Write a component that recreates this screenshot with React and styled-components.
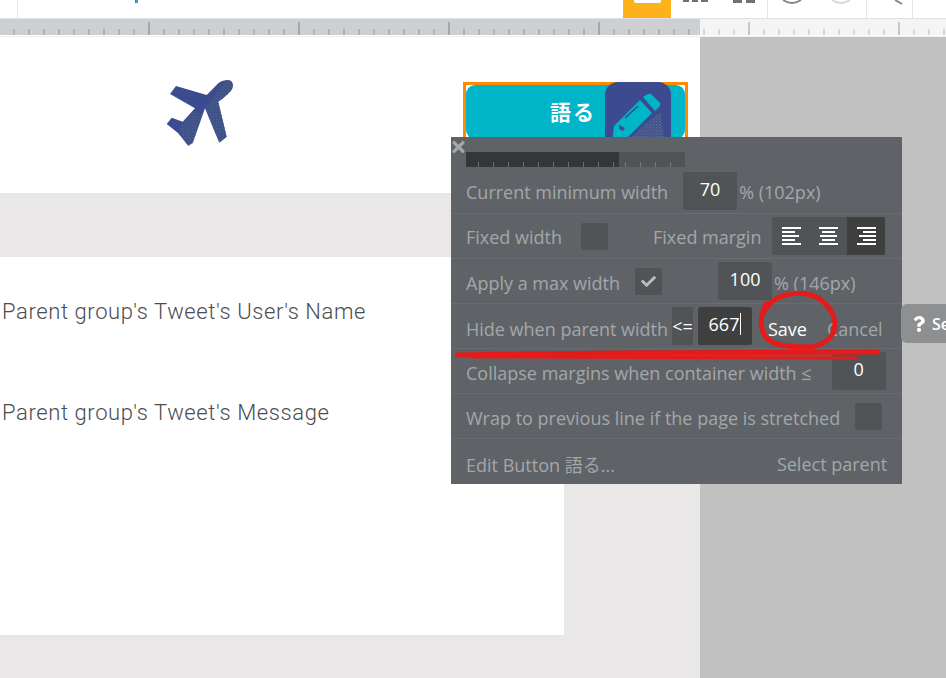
import styled, { createGlobalStyle } from 'styled-components';
import { FaCheck, FaTimes, FaQuestion } from 'react-icons/fa';

const GlobalStyle = createGlobalStyle`
  html, body {
    margin: 0;
    padding: 0;
    background: #fff;
  }
  #root {
    width: 946px;
    height: 678px;
  }
`;

const Page = styled.div`
  position: relative;
  display: flex;
  flex-direction: column;
  width: 946px;
  height: 678px;
  overflow: hidden;
  font-family: 'Open Sans', 'Noto Sans CJK JP', sans-serif;
`;

const TopBar = styled.div`
  display: flex;
  align-items: flex-end;
  height: 18px;
  flex: none;
  overflow: hidden;
  background: #fff;
`;

const TopDivider = styled.div`
  width: 1px;
  height: 18px;
  flex: none;
  margin-left: ${(p) => p.$left}px;
  background: #e6e6e6;
`;

const RedMark = styled.div`
  width: 3px;
  height: 3px;
  flex: none;
  align-self: flex-start;
  margin-left: ${(p) => p.$left}px;
  background: linear-gradient(90deg, #d8453f 50%, #3aa6c0 50%);
`;

const YellowTab = styled.div`
  display: flex;
  justify-content: center;
  width: 48px;
  height: 18px;
  flex: none;
  margin-left: 485px;
  background: #fdb11a;
`;

const TabGlyph = styled.div`
  width: 27px;
  height: 3px;
  background: #fff;
  border-radius: 0 0 2px 2px;
`;

const TopIcon = styled.svg`
  flex: none;
  align-self: flex-start;
  margin-left: ${(p) => p.$left}px;
`;

const Ruler = styled.div`
  display: flex;
  height: 19px;
  flex: none;
  box-sizing: border-box;
  border-top: 1px solid #e2e2e2;
  border-bottom: 1px solid #f0f0f0;
`;

const RulerTrack = styled.div`
  height: 16px;
  width: ${(p) => p.$width}px;
  flex: none;
  background: ${(p) => (p.$light ? '#f4f4f4' : '#cdd0d2')};
`;

const MinorTicks = styled.div`
  height: 16px;
  width: 100%;
  background-image: repeating-linear-gradient(90deg, transparent 0 ${(p) => p.$minor}px, ${(p) => p.$color} ${(p) => p.$minor}px ${(p) => p.$minor + 2}px, transparent ${(p) => p.$minor + 2}px 15px);
  background-size: 100% 6px;
  background-repeat: no-repeat;
  background-position: bottom;
`;

const MajorTicks = styled.div`
  height: 16px;
  width: 100%;
  background-image: repeating-linear-gradient(90deg, transparent 0 ${(p) => p.$major}px, ${(p) => p.$color} ${(p) => p.$major}px ${(p) => p.$major + 2}px, transparent ${(p) => p.$major + 2}px 150px);
  background-size: 100% 13px;
  background-repeat: no-repeat;
  background-position: bottom;
`;

const Workspace = styled.div`
  display: flex;
  flex: 1;
  min-height: 0;
`;

const Canvas = styled.div`
  display: flex;
  flex-direction: column;
  width: 700px;
  flex: none;
  background: #e9e7e8;
`;

const SideArea = styled.div`
  flex: 1;
  background: #c1c1c1;
`;

const HeaderCard = styled.div`
  display: flex;
  align-items: flex-start;
  height: 156px;
  flex: none;
  padding: 43px 0 0 166px;
  box-sizing: border-box;
  background: #fff;
`;

const SelectedButton = styled.div`
  display: flex;
  width: 225px;
  height: 64px;
  flex: none;
  margin: 2px 0 0 213px;
  border: 3px solid #ff8a00;
  box-sizing: border-box;
`;

const ButtonFace = styled.div`
  display: flex;
  justify-content: flex-end;
  width: 100%;
  height: 54px;
  padding-right: 14px;
  border-radius: 9px;
  box-sizing: border-box;
  background: #00b5c8;
`;

const ButtonLabel = styled.span`
  margin: 14px 9px 0 0;
  color: #fff;
  font-size: 21px;
  line-height: 26px;
  font-weight: 700;
  letter-spacing: 2px;
`;

const PencilTile = styled.svg`
  flex: none;
  margin-top: -3px;
`;

const BodyCard = styled.div`
  display: flex;
  flex-direction: column;
  width: 564px;
  height: 378px;
  flex: none;
  margin-top: 64px;
  padding: 40px 0 0 2px;
  box-sizing: border-box;
  background: #fff;
`;

const BodyLine = styled.div`
  height: ${(p) => p.$height}px;
  color: #4a4d50;
  font-family: Roboto, sans-serif;
  font-size: 22px;
  font-weight: 300;
  line-height: 30px;
  letter-spacing: 0.6px;
`;

const Panel = styled.div`
  position: absolute;
  left: 451px;
  top: 137px;
  display: flex;
  flex-direction: column;
  width: 451px;
  height: 347px;
  background: #5f6367;
  color: #a3a7aa;
  font-size: 18px;
`;

const CloseIcon = styled(FaTimes)`
  position: absolute;
  left: 0;
  top: 1px;
  width: 15px;
  height: 18px;
  color: #a5a8aa;
`;

const SliderRow = styled.div`
  height: 32px;
  flex: none;
  padding: 15px 0 0 15px;
  box-sizing: border-box;
`;

const SliderTrack = styled.div`
  display: flex;
  width: 219px;
  height: 15px;
  background: #505456;
`;

const SliderFill = styled.div`
  width: 153px;
  height: 15px;
  background-color: #343739;
  background-image: repeating-linear-gradient(90deg, transparent 0 12px, #6b6e70 12px 13px, transparent 13px 15px);
  background-size: 100% 5px;
  background-repeat: no-repeat;
  background-position: bottom;
`;

const SliderRest = styled.div`
  flex: 1;
  background-image: repeating-linear-gradient(90deg, transparent 0 6px, #777a7c 6px 7px, transparent 7px 15px);
  background-size: 100% 5px;
  background-repeat: no-repeat;
  background-position: bottom;
`;

const Row = styled.div`
  display: flex;
  align-items: center;
  height: 45px;
  flex: none;
  padding: 0 15px;
  box-sizing: border-box;
  border-bottom: ${(p) => (p.$last ? 'none' : '1px solid #686c6f')};
  white-space: nowrap;
`;

const Label = styled.span`
  margin-left: ${(p) => p.$left || 0}px;
  margin-top: ${(p) => p.$drop || 0}px;
  color: ${(p) => (p.$bright ? '#fff' : 'inherit')};
`;

const Field = styled.div`
  display: flex;
  align-items: center;
  justify-content: center;
  width: 54px;
  height: 38px;
  flex: none;
  margin-left: ${(p) => p.$left || 0}px;
  border-radius: 2px;
  background: ${(p) => (p.$dark ? '#3f3f3f' : '#505456')};
  color: #fff;
  font-size: 18px;
  padding-bottom: 4px;
  box-sizing: border-box;
`;

const Caret = styled.span`
  width: 1px;
  height: 22px;
  margin-left: 1px;
  background: #fff;
`;

const Check = styled.div`
  display: flex;
  align-items: center;
  justify-content: center;
  width: 27px;
  height: 27px;
  flex: none;
  margin-left: ${(p) => p.$left}px;
  border-radius: 2px;
  background: #505456;
  color: #b9bcbe;
  font-size: 15px;
`;

const Operator = styled.div`
  display: flex;
  align-items: center;
  justify-content: center;
  width: 21px;
  height: 38px;
  flex: none;
  margin: 0 5px 0 4px;
  background: #505456;
  color: #fff;
`;

const AlignGroup = styled.div`
  display: flex;
  height: 38px;
  flex: none;
  margin-left: 11px;
  border-radius: 2px;
  background: #505456;
`;

const AlignButton = styled.div`
  display: flex;
  align-items: center;
  justify-content: center;
  width: ${(p) => (p.$active ? 38 : 37.5)}px;
  background: ${(p) => (p.$active ? '#3f3f3f' : 'transparent')};
`;

const Tooltip = styled.div`
  position: absolute;
  left: 901px;
  top: 304px;
  display: flex;
  align-items: center;
  gap: 5px;
  width: 60px;
  height: 39px;
  padding-left: 10px;
  border-radius: 6px;
  box-sizing: border-box;
  background: #8e8f90;
  color: #fff;
  font-size: 16px;
  font-weight: 600;
`;

const Scribble = styled.svg`
  position: absolute;
  left: 0;
  top: 0;
  pointer-events: none;
`;

const alignLines = [19, 13, 17, 13, 19];

function AlignIcon({ side }) {
  return (
    <svg width="19" height="18" viewBox="0 0 19 18">
      {alignLines.map((w, i) => {
        let x = 0;
        if (side === 'center') x = (19 - w) / 2;
        if (side === 'right') x = 19 - w;
        return <rect key={i} x={x} y={i * 4} width={w} height="2" fill="#fff" />;
      })}
    </svg>
  );
}

function PlaneIcon() {
  const outline =
    'M78 15 C82 15 84 19 82.5 23 C81 27 75 32 68.3 36.7 L76.7 71.7 L69.3 77.7 L55 43.3 L42.7 78 L38.3 80.7 L28 68 L16.7 59 L21.7 52.7 L32.7 56.7 L45 43.3 L20 29 L26 21 L56.7 30 L68.3 18.3 C71 16 75 15 78 15 Z';
  return (
    <svg width="100" height="90" viewBox="0 0 100 90" style={{ margin: '-15px 0 0 -16px', flex: 'none' }}>
      <defs>
        <pattern id="planeDots" width="3" height="3" patternUnits="userSpaceOnUse">
          <rect x="0" y="0" width="1.5" height="1.5" fill="#4a6484" />
          <rect x="1.5" y="1.5" width="1.5" height="1.5" fill="#46597f" />
        </pattern>
        <clipPath id="planeClip">
          <path d={outline} />
        </clipPath>
      </defs>
      <path d={outline} fill="#3c4a90" />
      <g clipPath="url(#planeClip)">
        <path d="M78 12 L86 30 L80 82 L66 82 L56 42 Z" fill="url(#planeDots)" />
        <path d="M44 46 L52 50 L44 84 L34 84 L30 62 Z" fill="url(#planeDots)" />
      </g>
    </svg>
  );
}

function PencilIcon() {
  return (
    <PencilTile width="66" height="68" viewBox="0 0 66 68">
      <defs>
        <pattern id="pencilDots" width="3" height="3" patternUnits="userSpaceOnUse">
          <rect x="0" y="0" width="1.5" height="1.5" fill="#5f7290" />
          <rect x="1.5" y="1.5" width="1.5" height="1.5" fill="#4f6186" />
        </pattern>
      </defs>
      <rect width="66" height="68" rx="13" fill="#3c4a90" />
      <path d="M56 30 L60 68 L14 68 L40 42 Z" fill="url(#pencilDots)" />
      <path d="M38 15 L43 12 Q45 11 47 13 L55 21 Q56 23 54 25 L50 29 Z" fill="#00b5c8" />
      <path d="M35 18 L47 31 L20 58 L6 68 L9 44 Z" fill="#00b5c8" />
      <path d="M20 36 L33 24" stroke="#3c4a90" strokeWidth="1.6" fill="none" />
      <path d="M14 43 L20 46 L18 49 L14 47 Z" fill="#3c4a90" />
    </PencilTile>
  );
}

function RulerStrip({ width, light, minor, major }) {
  const minorColor = light ? '#d6d8d9' : '#afb2b5';
  const majorColor = light ? '#c4c6c8' : '#a4a8ab';
  return (
    <RulerTrack $width={width} $light={light}>
      <MinorTicks $minor={minor} $color={minorColor}>
        <MajorTicks $major={major} $color={majorColor} />
      </MinorTicks>
    </RulerTrack>
  );
}

export default function App() {
  return (
    <Page>
      <GlobalStyle />
      <TopBar>
        <TopDivider $left={17} />
        <RedMark $left={117} />
        <YellowTab>
          <TabGlyph />
        </YellowTab>
        <TopIcon $left={12} width="25" height="4" viewBox="0 0 25 4">
          <path d="M0 0h6v2H0zM9 0h6v2H9zM18 0h7v2h-7z" fill="#6f7377" />
        </TopIcon>
        <TopIcon $left={25} width="22" height="4" viewBox="0 0 22 4">
          <path d="M0 0h9v3H0zM13 0h9v3h-9z" fill="#6f7377" />
        </TopIcon>
        <TopDivider $left={12} />
        <TopIcon $left={12} width="24" height="4" viewBox="0 0 24 4">
          <path d="M3 0 Q12 6 21 0" stroke="#85888b" strokeWidth="2" fill="none" />
        </TopIcon>
        <TopIcon $left={25} width="24" height="4" viewBox="0 0 24 4">
          <path d="M3 0 Q12 6 21 0" stroke="#d7d8d9" strokeWidth="2" fill="none" />
        </TopIcon>
        <TopDivider $left={13} />
        <TopIcon $left={24} width="12" height="5" viewBox="0 0 12 5">
          <path d="M4 0 L11 4" stroke="#85888b" strokeWidth="2" fill="none" />
        </TopIcon>
        <TopDivider $left={9} />
      </TopBar>
      <Ruler>
        <RulerStrip width={700} minor={13} major={148} />
        <RulerStrip width={246} light minor={3} major={48} />
      </Ruler>
      <Workspace>
        <Canvas>
          <HeaderCard>
            <PlaneIcon />
            <SelectedButton>
              <ButtonFace>
                <ButtonLabel>語る</ButtonLabel>
                <PencilIcon />
              </ButtonFace>
            </SelectedButton>
          </HeaderCard>
          <BodyCard>
            <BodyLine $height={101}>Parent group's Tweet's User's Name</BodyLine>
            <BodyLine $height={30}>Parent group's Tweet's Message</BodyLine>
          </BodyCard>
        </Canvas>
        <SideArea />
      </Workspace>

      <Panel>
        <CloseIcon />
        <SliderRow>
          <SliderTrack>
            <SliderFill />
            <SliderRest />
          </SliderTrack>
        </SliderRow>
        <Row>
          <Label $drop={1}>Current minimum width</Label>
          <Field $left={15}>70</Field>
          <Label $left={2} $drop={1}>% (102px)</Label>
        </Row>
        <Row>
          <Label $drop={2}>Fixed width</Label>
          <Check $left={19} />
          <Label $left={45} $drop={2}>Fixed margin</Label>
          <AlignGroup>
            <AlignButton><AlignIcon side="left" /></AlignButton>
            <AlignButton><AlignIcon side="center" /></AlignButton>
            <AlignButton $active><AlignIcon side="right" /></AlignButton>
          </AlignGroup>
        </Row>
        <Row>
          <Label $drop={3}>Apply a max width</Label>
          <Check $left={15}><FaCheck /></Check>
          <Field $left={56}>100</Field>
          <Label $left={2} $drop={3}>% (146px)</Label>
        </Row>
        <Row>
          <Label $drop={6}>Hide when parent width</Label>
          <Operator>&lt;=</Operator>
          <Field $dark>667<Caret /></Field>
          <Label $left={16} $drop={6} $bright>Save</Label>
          <Label $left={20} $drop={6}>Cancel</Label>
        </Row>
        <Row>
          <Label $drop={4}>Collapse margins when container width ≤</Label>
          <Field $left={20}>0</Field>
        </Row>
        <Row>
          <Label $drop={3}>Wrap to previous line if the page is stretched</Label>
          <Check $left={15} />
        </Row>
        <Row $last>
          <Label $drop={4}>Edit Button 語る...</Label>
          <Label $left={162} $drop={4}>Select parent</Label>
        </Row>
      </Panel>

      <Tooltip>
        <FaQuestion />
        Se
      </Tooltip>

      <Scribble width="946" height="678" viewBox="0 0 946 678">
        <path d="M457 355 L620 353 L878 352" stroke="#e51a1a" strokeWidth="5" strokeLinecap="round" fill="none" />
        <path d="M470 357 L857 358" stroke="#e51a1a" strokeWidth="3" fill="none" />
        <path
          d="M764 312 C772 296 790 291 806 294 C822 296 834 310 835 324 C835 338 822 347 806 347 C790 347 772 346 765 336 C759 326 760 316 766 304"
          stroke="#e51a1a"
          strokeWidth="5"
          strokeLinecap="round"
          fill="none"
        />
      </Scribble>
    </Page>
  );
}
